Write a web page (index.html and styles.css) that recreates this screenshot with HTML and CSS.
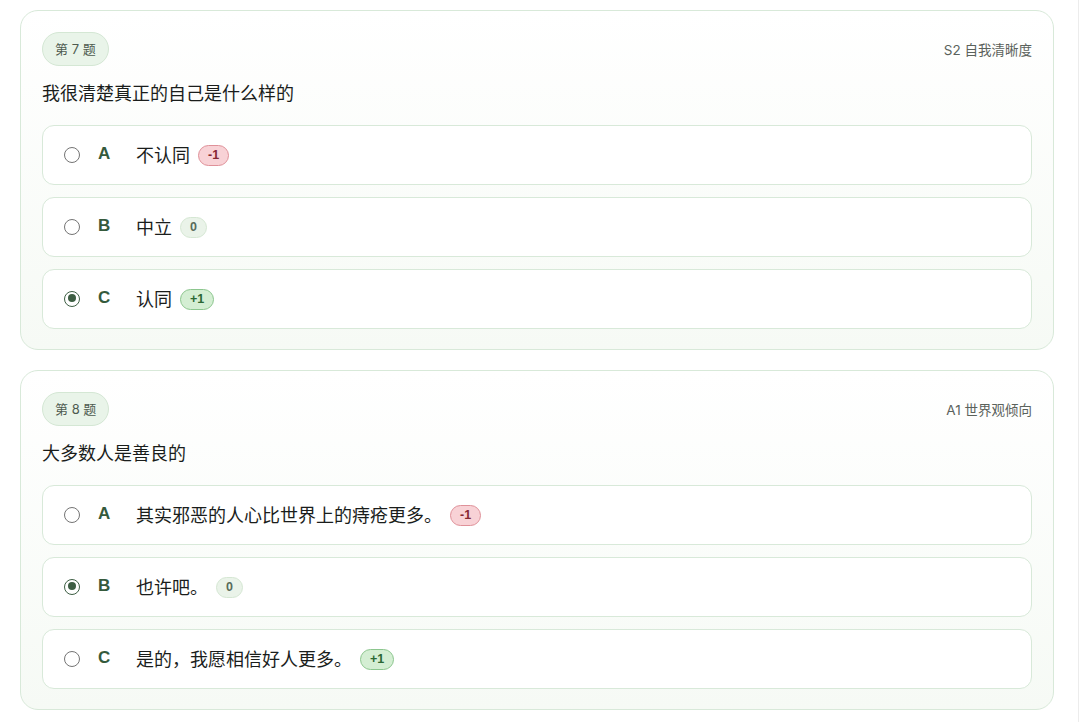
FILE: index.html
```html
<!DOCTYPE html>
<html lang="zh-CN">
<head>
    <meta charset="UTF-8">
    <meta name="viewport" content="width=device-width, initial-scale=1.0">
    <title>问卷</title>
    <link rel="stylesheet" href="styles.css">
</head>
<body>
    <div class="page">
        <div class="question-card">
            <div class="card-head">
                <span class="q-tag">第 7 题</span>
                <span class="q-dim">S2 自我清晰度</span>
            </div>
            <div class="q-title">我很清楚真正的自己是什么样的</div>
            <div class="options">
                <label class="option">
                    <span class="radio"></span>
                    <span class="letter">A</span>
                    <span class="opt-text">不认同</span>
                    <span class="score neg">-1</span>
                </label>
                <label class="option">
                    <span class="radio"></span>
                    <span class="letter">B</span>
                    <span class="opt-text">中立</span>
                    <span class="score zero">0</span>
                </label>
                <label class="option">
                    <span class="radio checked"></span>
                    <span class="letter">C</span>
                    <span class="opt-text">认同</span>
                    <span class="score pos">+1</span>
                </label>
            </div>
        </div>

        <div class="question-card">
            <div class="card-head">
                <span class="q-tag">第 8 题</span>
                <span class="q-dim">A1 世界观倾向</span>
            </div>
            <div class="q-title">大多数人是善良的</div>
            <div class="options">
                <label class="option">
                    <span class="radio"></span>
                    <span class="letter">A</span>
                    <span class="opt-text">其实邪恶的人心比世界上的痔疮更多。</span>
                    <span class="score neg">-1</span>
                </label>
                <label class="option">
                    <span class="radio checked"></span>
                    <span class="letter">B</span>
                    <span class="opt-text">也许吧。</span>
                    <span class="score zero">0</span>
                </label>
                <label class="option">
                    <span class="radio"></span>
                    <span class="letter">C</span>
                    <span class="opt-text">是的，我愿相信好人更多。</span>
                    <span class="score pos">+1</span>
                </label>
            </div>
        </div>
    </div>
</body>
</html>
```

FILE: styles.css
```css
body {
    margin: 0;
    background: #ffffff;
    font-family: "Inter", "Noto Sans CJK SC", sans-serif;
    color: #222;
}

.page {
    width: 1079px;
    min-height: 100vh;
    box-sizing: border-box;
    border-right: 1px solid #ececec;
    padding: 10px 0 0 20px;
    display: flex;
    flex-direction: column;
    gap: 20px;
}

.question-card {
    width: 1034px;
    box-sizing: border-box;
    border: 1px solid #d8e9d9;
    border-radius: 18px;
    background: linear-gradient(180deg, #ffffff 0%, #f6faf5 100%);
    padding: 21px 21px 20px;
}

.card-head {
    display: flex;
    justify-content: space-between;
    align-items: center;
}

.q-tag {
    display: inline-block;
    height: 34px;
    line-height: 32px;
    box-sizing: border-box;
    padding: 0 12px;
    border: 1px solid #d4e7d4;
    border-radius: 17px;
    background: #e9f4e9;
    color: #4e5b50;
    font-size: 13px;
}

.q-dim {
    font-size: 13.5px;
    color: #5b625c;
}

.q-title {
    margin-top: 16px;
    font-size: 18px;
    line-height: 24px;
    font-weight: 400;
    color: #1a1d1b;
}

.options {
    margin-top: 19px;
    display: flex;
    flex-direction: column;
    gap: 12px;
}

.option {
    height: 60px;
    box-sizing: border-box;
    border: 1px solid #d8e9d9;
    border-radius: 12px;
    background: #fff;
    display: flex;
    align-items: center;
    padding: 0 21px;
    cursor: pointer;
}

.radio {
    width: 16px;
    height: 16px;
    box-sizing: border-box;
    border: 1.3px solid #747474;
    border-radius: 50%;
    background: #fff;
    position: relative;
    margin-top: -1px;
}

.radio.checked {
    border: 1.5px solid #3d5e43;
}

.radio.checked::after {
    content: "";
    position: absolute;
    left: 2.5px;
    top: 2.5px;
    width: 8px;
    height: 8px;
    border-radius: 50%;
    background: #3d5e43;
}

.letter {
    width: 20px;
    margin-left: 18px;
    margin-right: 18px;
    font-family: "Liberation Sans", sans-serif;
    font-weight: 700;
    font-size: 17px;
    color: #355a3c;
    margin-top: -2px;
}

.opt-text {
    font-size: 18px;
    color: #1a1d1b;
    margin-top: -3px;
}

.score {
    margin-left: 8px;
    height: 21px;
    line-height: 19px;
    box-sizing: border-box;
    padding: 0 9px;
    border-radius: 11px;
    font-family: "Liberation Sans", sans-serif;
    font-size: 12.5px;
    font-weight: 700;
    border: 1px solid;
}

.score.neg {
    background: #f8d2d6;
    border-color: #df9199;
    color: #862833;
}

.score.zero {
    background: #eaf3e9;
    border-color: #d5e7d3;
    color: #586b5a;
}

.score.pos {
    background: #d4eed3;
    border-color: #8cc68e;
    color: #2b6734;
}
```
